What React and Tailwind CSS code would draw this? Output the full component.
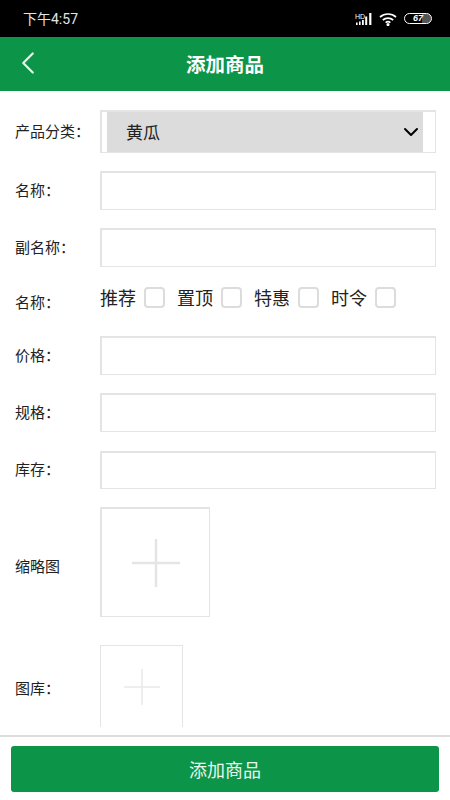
import { ChevronLeft, ChevronDown } from "lucide-react";

const font = "font-['Noto_Sans_CJK_SC','Liberation_Sans',sans-serif]";
const boxBorder = "border-t-2 border-l-2 border-r border-b border-[#e4e4e4]";

function Label({ children, className = "pb-[2px]" }) {
  return <div className={"w-[100px] shrink-0 pl-[15px] text-[15px] leading-[20px] text-[#222] " + className}>{children}</div>;
}

function TextRow({ label, className, height = "h-[39px]" }) {
  return (
    <div className={"flex items-center " + className}>
      <Label>{label}</Label>
      <input className={"w-[336px] bg-white outline-none " + height + " " + boxBorder} />
    </div>
  );
}

function Check({ label }) {
  return (
    <label className="flex items-center gap-[8px]">
      <span className="text-[18px] leading-[22px] text-[#222]">{label}</span>
      <span className="h-[21px] w-[21px] rounded-[4px] border-2 border-[#dcdcdc] bg-white" />
    </label>
  );
}

function PlusBox({ box, size, stroke, color, bottomOpen }) {
  return (
    <div className={"flex items-center justify-center border-[#e4e4e4] " + box + (bottomOpen ? " border border-b-0" : " border-t-2 border-l-2 border-r border-b")}>
      <svg width={size} height={size} viewBox="0 0 48 48" fill="none">
        <path d="M24 0V48M0 24H48" stroke={color} strokeWidth={stroke} />
      </svg>
    </div>
  );
}

function StatusIcons() {
  return (
    <div className="flex items-center gap-[7px]">
      <svg width="17" height="12" viewBox="0 0 17 12" fill="#fff">
        <text x="0" y="5.5" fontSize="7" fontFamily="Liberation Sans">HD</text>
        <rect x="1" y="9.5" width="1.6" height="2.5" />
        <rect x="4" y="8.5" width="1.6" height="3.5" />
        <rect x="7" y="7" width="1.8" height="5" />
        <rect x="10.2" y="3.5" width="2" height="8.5" />
        <rect x="14.2" y="0" width="2.2" height="12" />
      </svg>
      <svg width="18" height="14" viewBox="0 0 18 14" fill="none" stroke="#fff" strokeWidth="1.7">
        <path d="M1 5C5.5 1 12.5 1 17 5" />
        <path d="M3.8 8C6.8 5.4 11.2 5.4 14.2 8" />
        <path d="M6.6 10.6C8 9.6 10 9.6 11.4 10.6" />
        <circle cx="9" cy="12.6" r="0.7" fill="#fff" />
      </svg>
      <div className="flex h-[11px] w-[28px] items-center justify-center rounded-[6px] border border-white bg-[linear-gradient(90deg,#000_65%,#555_65%)] text-[9px] italic font-bold leading-none text-white font-['Liberation_Sans',sans-serif]">
        67
      </div>
    </div>
  );
}

export default function App() {
  return (
    <div className={"flex h-[800px] w-[450px] flex-col overflow-hidden bg-white " + font}>
      <div className="flex h-[37px] shrink-0 items-center justify-between bg-black pl-[23px] pr-[18px]">
        <span className="text-[14px] leading-none text-[#e4e4e4] font-['Roboto','Noto_Sans_CJK_SC',sans-serif]">下午4:57</span>
        <StatusIcons />
      </div>

      <div className="relative flex h-[54px] shrink-0 items-center justify-center bg-[#0c9448]">
        <ChevronLeft className="absolute left-[9px] top-[7px] text-[#e4f5ea]" size={38} strokeWidth={1.4} />
        <h1 className="text-[19.5px] font-bold leading-none text-white">添加商品</h1>
      </div>

      <div className="flex-1 overflow-hidden pt-[19px]">
        <div className="flex items-center">
          <Label>产品分类：</Label>
          <div className={"flex h-[43px] w-[336px] bg-white pl-[5px] pr-[12px] " + boxBorder}>
            <div className="flex flex-1 items-center justify-between bg-[#dcdcdc] pl-[19px]">
              <span className="text-[17px] text-[#222]">黄瓜</span>
              <ChevronDown className="text-black" size={24} strokeWidth={2} />
            </div>
          </div>
        </div>

        <TextRow label="名称：" className="mt-[18px]" />
        <TextRow label="副名称：" className="mt-[18px]" />

        <div className="mt-[18px] flex h-[33px] items-start">
          <Label className="pt-[7px]">名称：</Label>
          <div className="flex gap-[12px] pt-[1px]">
            <Check label="推荐" />
            <Check label="置顶" />
            <Check label="特惠" />
            <Check label="时令" />
          </div>
        </div>

        <TextRow label="价格：" className="mt-[18px]" />
        <TextRow label="规格：" className="mt-[18px]" />
        <TextRow label="库存：" className="mt-[19px]" height="h-[38px]" />

        <div className="mt-[18px] flex items-center">
          <Label className="mt-[8px]">缩略图</Label>
          <PlusBox box="h-[110px] w-[110px]" size={48} stroke={2.5} color="#e5e5e5" />
        </div>

        <div className="mt-[28px] flex items-center">
          <Label className="mt-[4px]">图库：</Label>
          <PlusBox box="h-[82px] w-[83px]" size={36} stroke={2} color="#e9e9e9" bottomOpen />
        </div>
      </div>

      <div className="h-[65px] shrink-0 border-t-2 border-[#dddddd] px-[11px] pt-[9px]">
        <button className="h-[46px] w-full rounded-[3px] bg-[#0c9448] text-[18px] text-[#e8f6ee]">添加商品</button>
      </div>
    </div>
  );
}
